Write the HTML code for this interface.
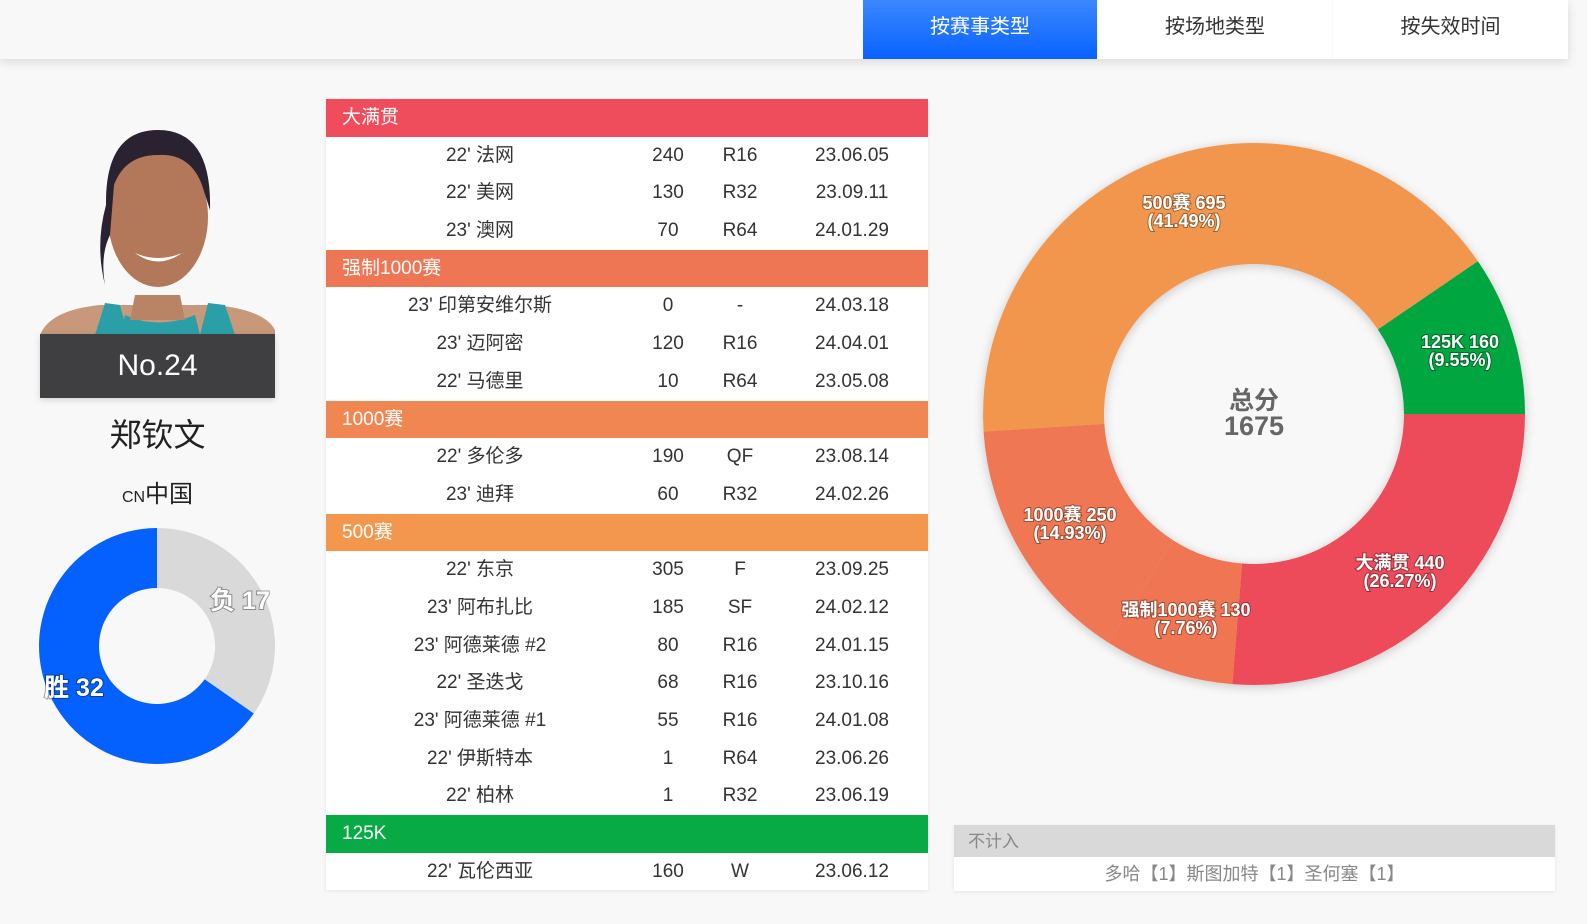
<!DOCTYPE html>
<html><head><meta charset="utf-8"><style>
*{margin:0;padding:0;box-sizing:border-box}
html{width:1587px;height:924px;overflow:hidden}
body{width:1587px;height:924px;background:#f8f8f8;font-family:"Liberation Sans","Noto Sans CJK SC",sans-serif;position:relative;overflow:hidden;color:#333}
.top{position:absolute;left:0;top:0;width:1568px;height:59px;background:#f8f8f8;box-shadow:0 3px 10px rgba(0,0,0,.12)}
.tab{position:absolute;top:0;height:59px;width:234px;background:#fff;text-align:center;line-height:54px;font-size:20px;color:#333}
.tab.on{background:linear-gradient(#3b87ff,#0862ff);color:#fff}
.tbl{position:absolute;left:326px;top:99px;width:602px;background:#fff;box-shadow:0 1px 4px rgba(0,0,0,.08);overflow:hidden}
.h{height:37.7px;line-height:37.7px;color:#fff;font-size:19px;padding-left:16px}
.r{height:37.7px;line-height:37.7px;position:relative;font-size:19px;color:#333}
.r span{position:absolute;top:0;width:200px;margin-left:-100px;text-align:center;white-space:nowrap}
.lbl{font-weight:bold;fill:#fff;font-family:"Liberation Sans","Noto Sans CJK SC",sans-serif;text-anchor:middle;font-size:18px;paint-order:stroke;stroke:rgba(0,0,0,.35);stroke-width:2px}
</style></head><body>
<div class="top">
<div class="tab on" style="left:863px">按赛事类型</div>
<div class="tab" style="left:1098px">按场地类型</div>
<div class="tab" style="left:1333px;width:235px">按失效时间</div>
</div>

<svg style="position:absolute;left:40px;top:125px" width="235" height="210">
<rect x="0" y="0" width="235" height="210" fill="#f8f8f8"/>
<path d="M0 210 Q10 185 60 180 L175 180 Q225 185 235 205 L235 210Z" fill="#c7987a"/>
<path d="M55 210 L65 178 L80 180 L88 210Z M160 210 L168 178 L185 180 L195 210Z" fill="#2a9fa8"/>
<path d="M85 190 Q117 205 155 190 L160 210 L80 210Z" fill="#2a9fa8"/>
<path d="M95 170 L140 170 L145 195 L90 195Z" fill="#b98366"/>
<ellipse cx="118" cy="92" rx="50" ry="70" fill="#b3785a"/>
<path d="M66 80 Q65 5 118 5 Q172 5 170 85 L162 60 Q150 28 118 30 Q85 30 74 60 L70 110 Q60 130 65 160 Q55 120 66 80Z" fill="#2a2230"/>
<path d="M95 128 Q118 145 142 128 Q118 138 95 128Z" fill="#fff"/>
</svg>
<div style="position:absolute;left:40px;top:334px;width:235px;height:64px;background:#3f3f42;color:#fff;font-size:30px;text-align:center;line-height:64px;box-shadow:0 2px 6px rgba(0,0,0,.15)">No.24</div>
<div style="position:absolute;left:40px;top:410px;width:235px;text-align:center;font-size:32px;color:#222">郑钦文</div>
<div style="position:absolute;left:40px;top:474px;width:235px;text-align:center;font-size:24px;color:#222"><span style="font-size:16px">CN</span>中国</div>

<svg style="position:absolute;left:0;top:0" width="300" height="800">
<path d="M157 528 A118 118 0 0 1 253.8 713.5 L204.6 679.2 A58 58 0 0 0 157 588Z" fill="#d9d9d9"/>
<path d="M253.8 713.5 A118 118 0 1 1 157 528 L157 588 A58 58 0 1 0 204.6 679.2Z" fill="#0561fd"/>
<text class="lbl" x="240" y="609" style="font-size:25px">负 17</text>
<text class="lbl" x="74" y="696" style="font-size:25px">胜 32</text>
</svg>

<div class="tbl">
<div class="h" style="background:#ef4d5b">大满贯</div>
<div class="r"><span style="left:154px">22' 法网</span><span style="left:342px">240</span><span style="left:414px">R16</span><span style="left:526px">23.06.05</span></div>
<div class="r"><span style="left:154px">22' 美网</span><span style="left:342px">130</span><span style="left:414px">R32</span><span style="left:526px">23.09.11</span></div>
<div class="r"><span style="left:154px">23' 澳网</span><span style="left:342px">70</span><span style="left:414px">R64</span><span style="left:526px">24.01.29</span></div>
<div class="h" style="background:#ef7655">强制1000赛</div>
<div class="r"><span style="left:154px">23' 印第安维尔斯</span><span style="left:342px">0</span><span style="left:414px">-</span><span style="left:526px">24.03.18</span></div>
<div class="r"><span style="left:154px">23' 迈阿密</span><span style="left:342px">120</span><span style="left:414px">R16</span><span style="left:526px">24.04.01</span></div>
<div class="r"><span style="left:154px">22' 马德里</span><span style="left:342px">10</span><span style="left:414px">R64</span><span style="left:526px">23.05.08</span></div>
<div class="h" style="background:#f08652">1000赛</div>
<div class="r"><span style="left:154px">22' 多伦多</span><span style="left:342px">190</span><span style="left:414px">QF</span><span style="left:526px">23.08.14</span></div>
<div class="r"><span style="left:154px">23' 迪拜</span><span style="left:342px">60</span><span style="left:414px">R32</span><span style="left:526px">24.02.26</span></div>
<div class="h" style="background:#f3974f">500赛</div>
<div class="r"><span style="left:154px">22' 东京</span><span style="left:342px">305</span><span style="left:414px">F</span><span style="left:526px">23.09.25</span></div>
<div class="r"><span style="left:154px">23' 阿布扎比</span><span style="left:342px">185</span><span style="left:414px">SF</span><span style="left:526px">24.02.12</span></div>
<div class="r"><span style="left:154px">23' 阿德莱德 #2</span><span style="left:342px">80</span><span style="left:414px">R16</span><span style="left:526px">24.01.15</span></div>
<div class="r"><span style="left:154px">22' 圣迭戈</span><span style="left:342px">68</span><span style="left:414px">R16</span><span style="left:526px">23.10.16</span></div>
<div class="r"><span style="left:154px">23' 阿德莱德 #1</span><span style="left:342px">55</span><span style="left:414px">R16</span><span style="left:526px">24.01.08</span></div>
<div class="r"><span style="left:154px">22' 伊斯特本</span><span style="left:342px">1</span><span style="left:414px">R64</span><span style="left:526px">23.06.26</span></div>
<div class="r"><span style="left:154px">22' 柏林</span><span style="left:342px">1</span><span style="left:414px">R32</span><span style="left:526px">23.06.19</span></div>
<div class="h" style="background:#07aa45">125K</div>
<div class="r"><span style="left:154px">22' 瓦伦西亚</span><span style="left:342px">160</span><span style="left:414px">W</span><span style="left:526px">23.06.12</span></div>
</div>

<svg style="position:absolute;left:0;top:0;overflow:hidden" width="1587" height="924">
<defs><filter id="sh" x="-10%" y="-10%" width="120%" height="120%"><feDropShadow dx="0" dy="2" stdDeviation="5" flood-opacity=".2"/></filter></defs>
<g filter="url(#sh)">
<path d="M1525 414 A271 271 0 0 1 1232.3 684.1 L1242 563.5 A150 150 0 0 0 1404 414Z" fill="#ee4b5a"/>
<path d="M1232.3 684.1 A271 271 0 0 1 1108.4 642.6 L1173.4 540.5 A150 150 0 0 0 1242 563.5Z" fill="#ef7452"/>
<path d="M1108.4 642.6 A271 271 0 0 1 983.6 431.5 L1104.3 423.7 A150 150 0 0 0 1173.4 540.5Z" fill="#ef7752"/>
<path d="M983.6 431.5 A271 271 0 0 1 1477.9 261.3 L1377.9 329.5 A150 150 0 0 0 1104.3 423.7Z" fill="#f3964e"/>
<path d="M1477.9 261.3 A271 271 0 0 1 1525 414 L1404 414 A150 150 0 0 0 1377.9 329.5Z" fill="#06a63f"/>
</g>
<text class="lbl" x="1184" y="209">500赛 695</text><text class="lbl" x="1184" y="227">(41.49%)</text>
<text class="lbl" x="1460" y="348">125K 160</text><text class="lbl" x="1460" y="366">(9.55%)</text>
<text class="lbl" x="1070" y="521">1000赛 250</text><text class="lbl" x="1070" y="539">(14.93%)</text>
<text class="lbl" x="1400" y="569">大满贯 440</text><text class="lbl" x="1400" y="587">(26.27%)</text>
<text class="lbl" x="1186" y="616">强制1000赛 130</text><text class="lbl" x="1186" y="634">(7.76%)</text>
<text x="1254" y="409" text-anchor="middle" font-size="25" font-weight="bold" fill="#666" font-family="Liberation Sans,Noto Sans CJK SC,sans-serif">总分</text>
<text x="1254" y="435" text-anchor="middle" font-size="27" font-weight="bold" fill="#666" font-family="Liberation Sans,sans-serif">1675</text>
</svg>

<div style="position:absolute;left:954px;top:825px;width:601px;height:66px;background:#fff;box-shadow:0 1px 4px rgba(0,0,0,.08)">
<div style="height:32px;background:#d9d9d9;color:#888;font-size:17px;line-height:34px;padding-left:14px">不计入</div>
<div style="height:34px;line-height:34px;text-align:center;color:#888;font-size:18px">多哈【1】斯图加特【1】圣何塞【1】</div>
</div>
</body></html>
